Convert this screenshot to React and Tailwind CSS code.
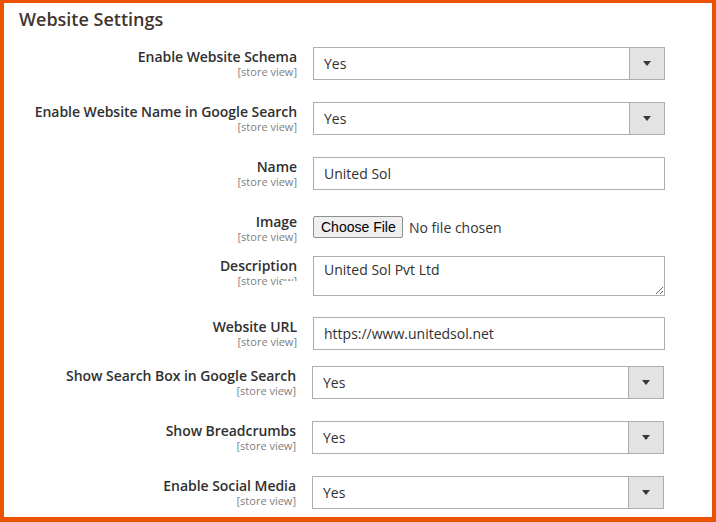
import React from "react";

function Caret() {
  return (
    <svg width="8" height="5" viewBox="0 0 8 5" className="block">
      <polygon points="0,0 8,0 4,5" fill="#41362f" />
    </svg>
  );
}

function Label({ title, clip }) {
  return (
    <div className="w-[293px] shrink-0 text-right">
      <div className="text-[14px] leading-[19px] font-semibold text-[#303030] tracking-[-0.05px]">{title}</div>
      <div className="text-[11px] leading-[12px] text-[#808080]">
        <span className="relative inline-block">
          [store view]
          {clip && <span className="absolute right-0 top-[6px] w-[15px] h-[8px] bg-white"></span>}
        </span>
      </div>
    </div>
  );
}

function Select() {
  return (
    <div className="flex w-[352px] h-[33px] border border-[#adadad] bg-white">
      <div className="flex-1 pl-[10px] text-[14px] leading-[31px] text-[#303030]">Yes</div>
      <div className="w-[35px] h-full border-l border-[#adadad] bg-[#e3e3e3] flex items-center justify-center">
        <Caret />
      </div>
    </div>
  );
}

function TextInput({ value }) {
  return (
    <div className="w-[352px] h-[33px] border border-[#adadad] bg-white pl-[10px] text-[14px] leading-[31px] text-[#303030]">
      {value}
    </div>
  );
}

function Row({ h, title, children, shift, clip }) {
  return (
    <div className={`flex items-start ${h} ${shift ? "-ml-px" : ""}`}>
      <Label title={title} clip={clip} />
      <div className="ml-4">{children}</div>
    </div>
  );
}

export default function App() {
  return (
    <div className="w-[716px] h-[522px] overflow-hidden bg-white border-[#eb5202] border-l-4 border-r-4 border-t-[3px] border-b-[5px] font-['Open_Sans',sans-serif]">
      <h2 className="pl-[15px] pt-[4px] text-[18px] leading-[25px] font-semibold text-[#41362f]">Website Settings</h2>
      <div className="mt-[15px] flex flex-col">
        <Row h="h-[55px]" title="Enable Website Schema"><Select /></Row>
        <Row h="h-[55px]" title="Enable Website Name in Google Search"><Select /></Row>
        <Row h="h-[55px]" title="Name"><TextInput value="United Sol" /></Row>
        <Row h="h-[44px]" title="Image">
          <div className="mt-[4px] flex items-center">
            <div className="h-[22px] w-[90px] border border-[#8f8f8f] rounded-[2px] bg-[#efefef] font-['Liberation_Sans',Arial,sans-serif] text-[14px] leading-[20px] text-black pl-[7px]">Choose File</div>
            <span className="ml-[6px] text-[14px] text-[#333333]">No file chosen</span>
          </div>
        </Row>
        <Row h="h-[61px]" title="Description" clip>
          <textarea
            readOnly
            defaultValue="United Sol Pvt Ltd"
            className="block w-[352px] h-[40px] border border-[#adadad] bg-white px-[10px] pt-[3px] text-[14px] leading-[19px] text-[#303030] outline-none"
          />
        </Row>
        <Row h="h-[49px]" title="Website URL"><TextInput value="https://www.unitedsol.net" /></Row>
        <Row h="h-[55px]" title="Show Search Box in Google Search" shift><Select /></Row>
        <Row h="h-[55px]" title="Show Breadcrumbs" shift><Select /></Row>
        <Row h="h-[55px]" title="Enable Social Media" shift><Select /></Row>
      </div>
    </div>
  );
}
